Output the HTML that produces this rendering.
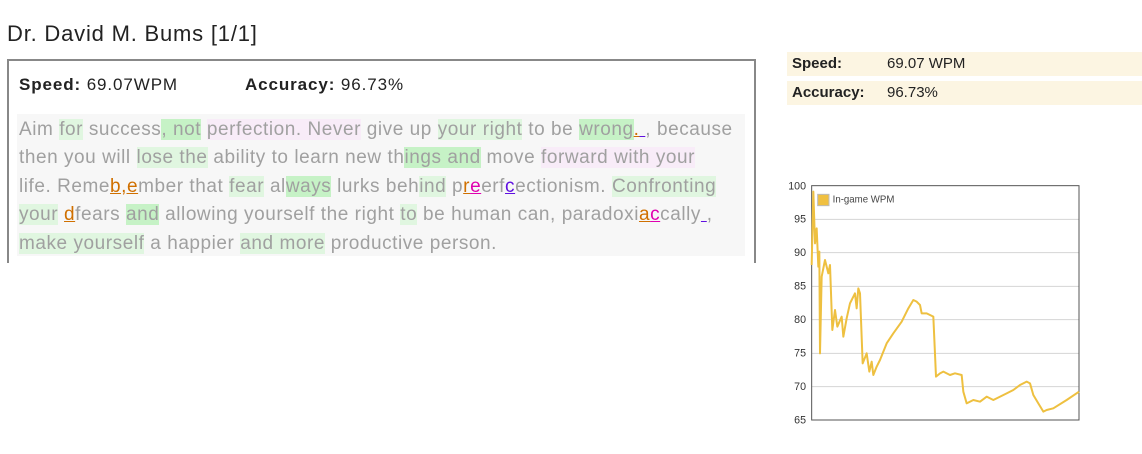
<!DOCTYPE html>
<html><head><meta charset="utf-8"><style>
body{margin:0;width:1142px;height:454px;background:#fff;font-family:"Liberation Sans",sans-serif;position:relative;overflow:hidden}
.t{position:absolute;left:7px;top:21px;font-size:22px;color:#222;letter-spacing:0.8px}
.box{position:absolute;left:7px;top:59px;width:749px;height:204px;border:2px solid #888;border-bottom:none;box-sizing:border-box}
.st{position:absolute;top:75px;font-size:17px;color:#222;letter-spacing:0.9px}
.txt{position:absolute;left:17px;top:114px;width:728px;height:142px;background:#f7f7f7;font-size:19px;letter-spacing:0.55px;line-height:28.4px;color:#a0a0a0;padding-left:2px;padding-top:2px;box-sizing:border-box;white-space:nowrap}
.g{background:#e0f6e0}.G{background:#c6f2c6}.p{background:#f8ecf8}
.o{color:#d07000;text-decoration:underline}.m{color:#e000b0;text-decoration:underline}.v{color:#6010e0;text-decoration:underline}
.r{position:absolute;left:787px;width:355px;height:24px;background:#fcf5e2;font-size:15px;color:#222;line-height:24px}
.r b{position:absolute;left:5px}.r span{position:absolute;left:100px}
</style></head><body>
<div class="t">Dr. David M. Bums [1/1]</div>
<div class="box"></div>
<div class="st" style="left:19px"><b>Speed:</b> 69.07WPM</div>
<div class="st" style="left:245px"><b>Accuracy:</b> 96.73%</div>
<div class="txt">Aim <span class="g">for</span> success<span class="G">, not</span> <span class="p">perfection. Never</span> give up <span class="g">your right</span> to be <span class="G">wrong</span><span class="o">.</span><span class="v"> </span>, because<br>then you will <span class="g">lose the</span> ability to learn new th<span class="G">ings and</span> move <span class="p">forward with your</span><br>life. Reme<span class="o">b,e</span>mber that <span class="g">fear</span> al<span class="G">ways</span> lurks beh<span class="g">ind</span> p<span class="o">r</span><span class="m">e</span>erf<span class="v">c</span>ectionism. <span class="g">Confronting</span><br><span class="g">your</span> <span class="o">d</span>fears <span class="G">and</span> allowing yourself the right <span class="g">to</span> be human can, paradoxi<span class="o">a</span><span class="m">c</span>cally<span class="v"> </span>,<br><span class="g">make yourself</span> a happier <span class="g">and more</span> productive person.</div>
<div class="r" style="top:52px"><b>Speed:</b><span>69.07 WPM</span></div>
<div class="r" style="top:81px"><b>Accuracy:</b><span>96.73%</span></div>
<svg style="position:absolute;left:780px;top:170px" width="310" height="260" viewBox="0 0 930 780">
<g stroke="#d4d4d4" stroke-width="3">
<line x1="95" y1="148" x2="897" y2="148"/><line x1="95" y1="248" x2="897" y2="248"/><line x1="95" y1="349" x2="897" y2="349"/><line x1="95" y1="449" x2="897" y2="449"/><line x1="95" y1="550" x2="897" y2="550"/><line x1="95" y1="650" x2="897" y2="650"/></g>
<rect x="95" y="47" width="802" height="703" fill="none" stroke="#555" stroke-width="3"/>
<g font-size="32" fill="#333" text-anchor="end" font-family="Liberation Sans,sans-serif">
<text x="78" y="58">100</text><text x="78" y="158">95</text><text x="78" y="258">90</text><text x="78" y="359">85</text><text x="78" y="459">80</text><text x="78" y="560">75</text><text x="78" y="660">70</text><text x="78" y="760">65</text></g>
<rect x="113" y="73" width="34" height="34" fill="#f0c040" stroke="#bbb" stroke-width="3"/>
<text x="158" y="98" font-size="29" fill="#444" font-family="Liberation Sans,sans-serif">In-game WPM</text>
<polyline fill="none" stroke="#eec040" stroke-width="6" stroke-linejoin="round" points="95,285 100,65 105,220 110,175 115,290 118,245 120,550 125,320 135,270 145,310 150,285 157,480 165,420 172,470 185,440 190,500 200,445 210,400 215,390 225,370 230,415 235,355 240,370 248,580 260,550 268,605 275,575 280,615 290,590 300,570 320,520 340,490 365,455 385,415 400,390 410,395 420,405 425,430 440,430 460,440 468,620 480,610 490,605 510,615 525,610 545,615 550,665 560,700 580,690 600,695 620,680 640,690 680,670 700,660 720,645 740,635 750,640 760,675 775,700 790,725 800,720 820,715 860,690 897,665"/>
</svg>
</body></html>
